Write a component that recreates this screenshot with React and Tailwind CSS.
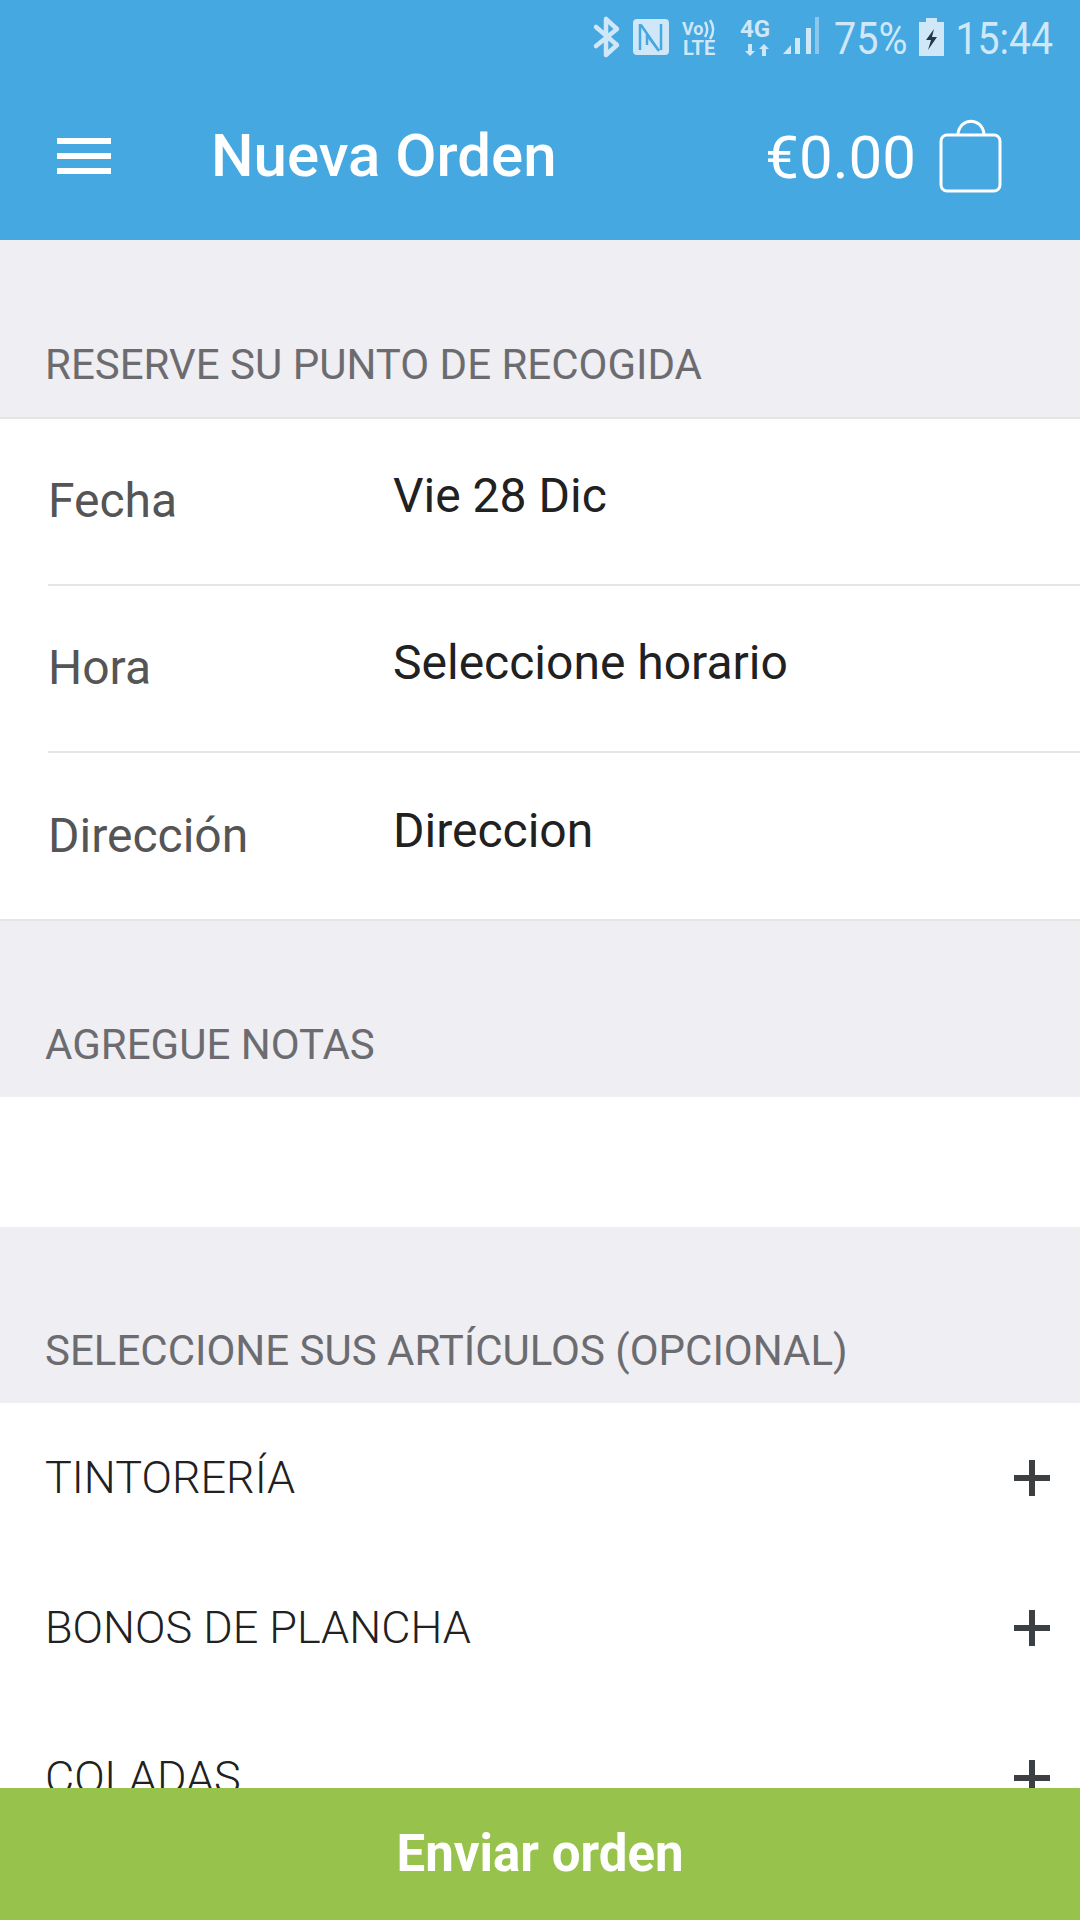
import React from "react";

const font = { fontFamily: "Roboto, sans-serif" };
const narrow75 = { ...font, transform: "scaleX(0.88)", transformOrigin: "right" };
const narrowClock = { ...font, transform: "scaleX(0.87)", transformOrigin: "right" };

function Plus() {
  return (
    <svg width="36" height="36" viewBox="0 0 36 36" className="shrink-0">
      <path d="M15 0h6v15h15v6H21v15h-6V21H0v-6h15z" fill="#3c4043" />
    </svg>
  );
}

function StatusBar() {
  return (
    <div className="h-[78px] flex items-start justify-end text-[#cfe7f7]">
      <svg width="232" height="60" viewBox="0 0 232 60" className="mt-[15px] mr-[2px] shrink-0">
        <path d="M16 4v36l11-10L6 12M16 4l11 10L6 31" fill="none" stroke="#cfe7f7" strokeWidth="4.5" strokeLinejoin="round" strokeLinecap="round" />
        <rect x="43" y="4" width="36" height="36" rx="4" fill="#cfe7f7" />
        <path d="M50 9v26M51 10l18 26M71 9v26M57 30V20l12 16" fill="none" stroke="#45a8e1" strokeWidth="2.5" />
        <text x="92" y="20" fontSize="18" fontWeight="700" fill="#cfe7f7" style={font}>Vo</text>
        <path d="M115 7c3 5 3 10 0 15M120 5c4 6 4 13 0 19" fill="none" stroke="#cfe7f7" strokeWidth="2.5" />
        <text x="93" y="40" fontSize="20" fontWeight="700" fill="#cfe7f7" style={font}>LTE</text>
        <text x="150" y="22" fontSize="24" fontWeight="700" fill="#cfe7f7" style={font}>4G</text>
        <path d="M158 29v7h-3l5 5 5-5h-3v-7zM172 41v-7h-3l5-5 5 5h-3v7z" fill="#cfe7f7" />
        <path d="M193 39l8-9v9z" fill="#cfe7f7" />
        <rect x="205" y="23" width="5" height="16" fill="#cfe7f7" />
        <rect x="216" y="13" width="5" height="26" fill="#cfe7f7" />
        <rect x="225" y="2" width="4" height="37" fill="#8cc8ee" />
      </svg>
      <span className="text-[45px] leading-[78px] mr-[11px]" style={narrow75}>75%</span>
      <svg width="25" height="38" viewBox="0 0 25 38" className="mt-[18px] shrink-0">
        <path d="M7 0h11v4h7v34H0V4h7z" fill="#cfe7f7" />
        <path d="M15 11L7 22h5l-3 10 9-13h-5z" fill="#1f3a4d" />
      </svg>
      <span className="text-[45px] leading-[78px] ml-[-3px] mr-[27px]" style={narrowClock}>15:44</span>
    </div>
  );
}

function Header() {
  return (
    <header className="h-[240px] shrink-0 bg-[#45a8e1] text-white">
      <StatusBar />
      <div className="flex items-center h-[156px] pl-[57px]">
        <div className="w-[54px] flex flex-col gap-[9px] shrink-0">
          <div className="h-[6px] bg-white" />
          <div className="h-[6px] bg-white" />
          <div className="h-[6px] bg-white" />
        </div>
        <h1 className="ml-[100px] text-[60px] font-medium leading-none" style={font}>Nueva Orden</h1>
        <span className="ml-auto text-[60px] leading-none mt-[4px]" style={font}>€0.00</span>
        <svg width="64" height="75" viewBox="0 0 64 75" className="ml-[22px] mr-[78px] shrink-0">
          <path d="M20 15c2-17 24-17 26 0" fill="none" stroke="white" strokeWidth="3" />
          <rect x="3" y="16" width="59" height="56" rx="6" fill="none" stroke="white" strokeWidth="3" />
        </svg>
      </div>
    </header>
  );
}

function SectionLabel({ children, h }) {
  return (
    <div className={`${h} shrink-0 bg-[#eeeef3] flex items-end pl-[45px] pb-[29px] text-[42px] leading-[46px] text-[#6c6c70]`} style={font}>
      <span>{children}</span>
    </div>
  );
}

function FormRow({ label, value, last }) {
  return (
    <div className="pl-[48px] bg-white">
      <div className={`flex items-center ${last ? "h-[166px]" : "h-[167px] border-b-2 border-[#e5e5e5]"}`}>
        <span className="w-[345px] text-[48px] text-[#555555] mt-[-1px]" style={font}>{label}</span>
        <span className="text-[48px] text-[#212121] mt-[-11px]" style={font}>{value}</span>
      </div>
    </div>
  );
}

function ItemRow({ label }) {
  return (
    <div className="h-[150px] flex items-center justify-between pl-[45px] pr-[30px] shrink-0">
      <span className="text-[45px] font-light text-[#212121]" style={font}>{label}</span>
      <Plus />
    </div>
  );
}

export default function App() {
  return (
    <div className="w-[1080px] h-[1920px] flex flex-col overflow-hidden bg-white" style={font}>
      <Header />
      <main className="flex-1 min-h-0 overflow-hidden flex flex-col">
        <SectionLabel h="h-[177px]">RESERVE SU PUNTO DE RECOGIDA</SectionLabel>
        <div className="shrink-0 border-y-2 border-[#e5e5e5] bg-white">
          <FormRow label="Fecha" value="Vie 28 Dic" />
          <FormRow label="Hora" value="Seleccione horario" />
          <FormRow label="Dirección" value="Direccion" last />
        </div>
        <SectionLabel h="h-[176px]">AGREGUE NOTAS</SectionLabel>
        <div className="h-[130px] bg-white shrink-0" />
        <SectionLabel h="h-[176px]">SELECCIONE SUS ARTÍCULOS (OPCIONAL)</SectionLabel>
        <ItemRow label="TINTORERÍA" />
        <ItemRow label="BONOS DE PLANCHA" />
        <ItemRow label="COLADAS" />
      </main>
      <button className="h-[132px] shrink-0 bg-[#97c24c] text-white text-[51px] font-bold" style={font}>Enviar orden</button>
    </div>
  );
}
